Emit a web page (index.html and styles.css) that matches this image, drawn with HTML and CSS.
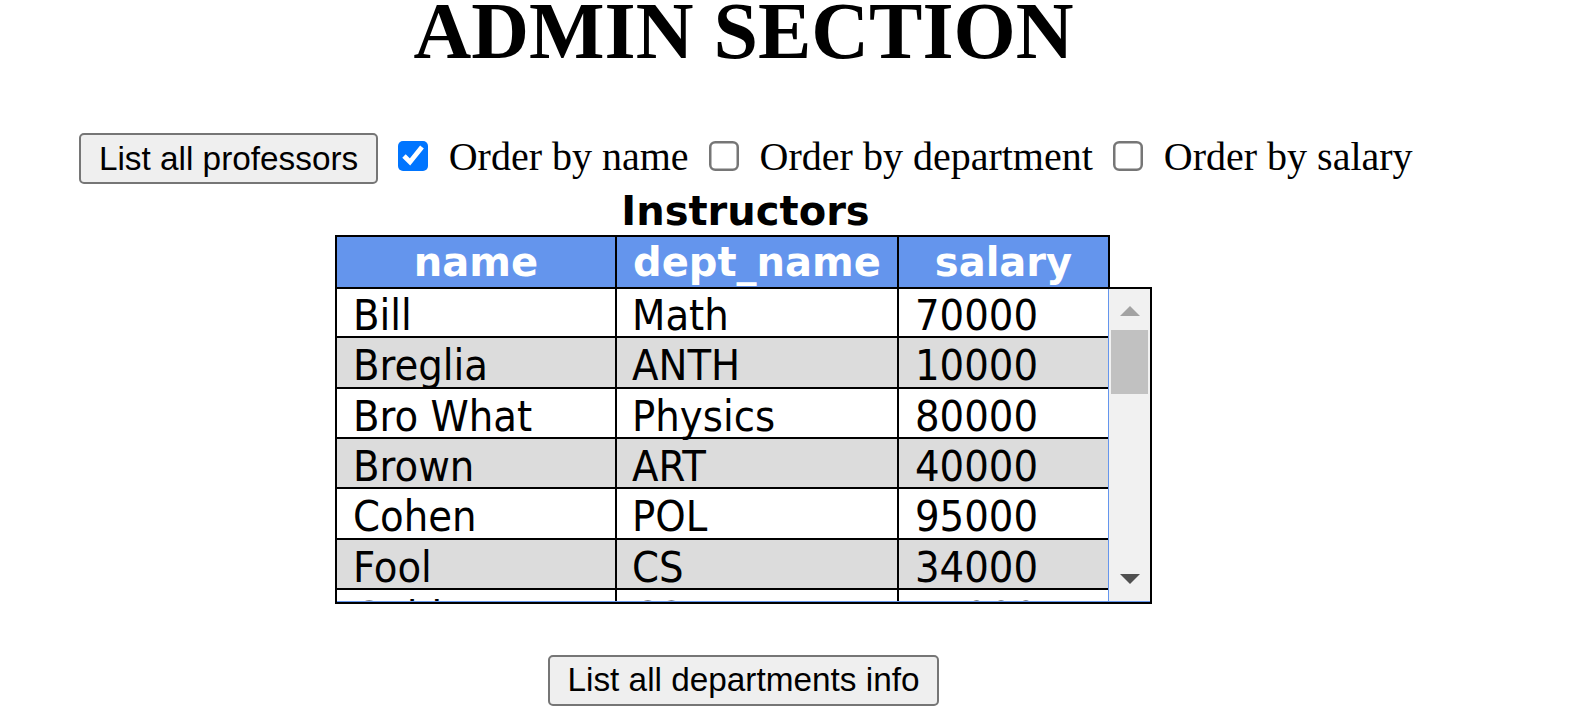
FILE: index.html
```html
<!DOCTYPE html>
<html lang="en">
<head>
<meta charset="utf-8">
<title>Admin Section</title>
<link rel="stylesheet" href="styles.css">
</head>
<body>
<div class="page">
  <h1 class="title">ADMIN SECTION</h1>

  <div class="options">
    <button class="btn" type="button">List all professors</button>
    <input class="cb" type="checkbox" checked>
    <span class="opt-label">Order by name</span>
    <input class="cb" type="checkbox">
    <span class="opt-label">Order by department</span>
    <input class="cb" type="checkbox">
    <span class="opt-label">Order by salary</span>
  </div>

  <div class="instructors">
    <div class="caption">Instructors</div>
    <table class="head-table">
      <tr>
        <th class="h1c">name</th>
        <th class="h2c">dept_name</th>
        <th class="h3c">salary</th>
      </tr>
    </table>
    <div class="body-box">
      <div class="body-inner">
        <div class="viewport">
          <table class="body-table">
            <tr><td class="c1">Bill</td><td class="c2">Math</td><td class="c3">70000</td></tr>
            <tr><td class="c1">Breglia</td><td class="c2">ANTH</td><td class="c3">10000</td></tr>
            <tr><td class="c1">Bro What</td><td class="c2">Physics</td><td class="c3">80000</td></tr>
            <tr><td class="c1">Brown</td><td class="c2">ART</td><td class="c3">40000</td></tr>
            <tr><td class="c1">Cohen</td><td class="c2">POL</td><td class="c3">95000</td></tr>
            <tr><td class="c1">Fool</td><td class="c2">CS</td><td class="c3">34000</td></tr>
            <tr><td class="c1">Gold</td><td class="c2">CS</td><td class="c3">17000</td></tr>
            <tr><td class="c1">Katz</td><td class="c2">CS</td><td class="c3">75000</td></tr>
          </table>
        </div>
        <div class="scrollbar">
          <div class="sb-btn"><span class="arrow up"></span></div>
          <div class="sb-track"><div class="sb-thumb"></div></div>
          <div class="sb-btn"><span class="arrow down"></span></div>
        </div>
      </div>
    </div>
  </div>

  <div class="bottom">
    <button class="btn btn-dept" type="button">List all departments info</button>
  </div>
</div>
</body>
</html>
```
FILE: styles.css
```css
html, body {
  margin: 0;
  padding: 0;
  background: #ffffff;
  color: #000000;
}

.page {
  width: 1487px;
}

.title {
  margin: 0;
  font-family: "Liberation Serif", "Times New Roman", serif;
  font-weight: bold;
  font-size: 80px;
  line-height: 62px;
  text-align: center;
}

.options {
  margin-top: 71px;
  padding-left: 5px;
  height: 51px;
  display: flex;
  justify-content: center;
  align-items: flex-start;
  gap: 20.5px;
}

.btn {
  box-sizing: border-box;
  height: 51px;
  padding: 0 17.5px;
  border: 2px solid #767676;
  border-radius: 5px;
  background: #efefef;
  color: #000;
  font-family: "Liberation Sans", Arial, sans-serif;
  font-size: 33.33px;
  white-space: nowrap;
}

.cb {
  zoom: 2.5;
  width: 12px;
  height: 12px;
  margin: 3px 0 0 0;
  flex: none;
}

.opt-label {
  margin-top: 0.5px;
  font-family: "Liberation Serif", "Times New Roman", serif;
  font-size: 40px;
  line-height: 46px;
  white-space: nowrap;
}

.instructors {
  width: 817px;
  margin: 3.2px auto 0;
}

.caption {
  font-family: "DejaVu Sans", Verdana, sans-serif;
  font-weight: bold;
  font-size: 40px;
  line-height: 48px;
  text-align: center;
  padding-left: 4px;
}

.head-table {
  width: 775px;
  table-layout: fixed;
  border-collapse: separate;
  border-spacing: 0;
}

.head-table th {
  box-sizing: border-box;
  height: 52px;
  padding: 0;
  background: #6495ed;
  color: #ffffff;
  border-top: 2px solid #000;
  border-right: 2px solid #000;
  font-family: "DejaVu Sans", Verdana, sans-serif;
  font-weight: bold;
  font-size: 40px;
  line-height: 50px;
  text-align: center;
  vertical-align: top;
  white-space: nowrap;
}

.head-table .h1c { width: 282px; border-left: 2px solid #000; }
.head-table .h2c { width: 282px; }
.head-table .h3c { width: 211px; }

.body-box {
  width: 817px;
  box-sizing: border-box;
  border: 2px solid #000;
}

.body-inner {
  display: flex;
  height: 312px;
  border-bottom: 1px solid #6495ed;
}

.viewport {
  width: 771px;
  overflow: hidden;
  border-right: 1px solid #6495ed;
}

.body-table {
  width: 771px;
  margin-top: -1px;
  table-layout: fixed;
  border-collapse: separate;
  border-spacing: 0;
}

.body-table td {
  box-sizing: border-box;
  padding: 7px 0 0 15px;
  border-bottom: 2px solid #000;
  font-family: "DejaVu Sans Condensed", "DejaVu Sans", Verdana, sans-serif;
  font-size: 43px;
  line-height: 41.3px;
  white-space: nowrap;
  background: #ffffff;
}

.body-table tr:nth-child(even) td {
  background: #dcdcdc;
}

.body-table .c1 { width: 280px; border-right: 2px solid #000; padding-left: 16px; }
.body-table .c2 { width: 282px; border-right: 2px solid #000; padding-left: 15px; }
.body-table .c3 { width: 209px; padding-left: 16px; }

.scrollbar {
  width: 41px;
  background: #f1f1f1;
  display: flex;
  flex-direction: column;
}

.sb-btn {
  height: 41px;
  display: flex;
  align-items: center;
  justify-content: center;
}

.sb-track {
  flex: 1;
  padding: 0 2px;
}

.sb-thumb {
  height: 64px;
  background: #c1c1c1;
}

.arrow {
  width: 0;
  height: 0;
  border-left: 10px solid transparent;
  border-right: 10px solid transparent;
}

.arrow.up {
  border-bottom: 10px solid #a3a3a3;
  margin-top: 3px;
}

.arrow.down {
  border-top: 10px solid #505050;
  margin-top: -3px;
}

.bottom {
  margin-top: 51px;
  display: flex;
  justify-content: center;
}

.btn-dept {
  height: 50.6px;
}
```
